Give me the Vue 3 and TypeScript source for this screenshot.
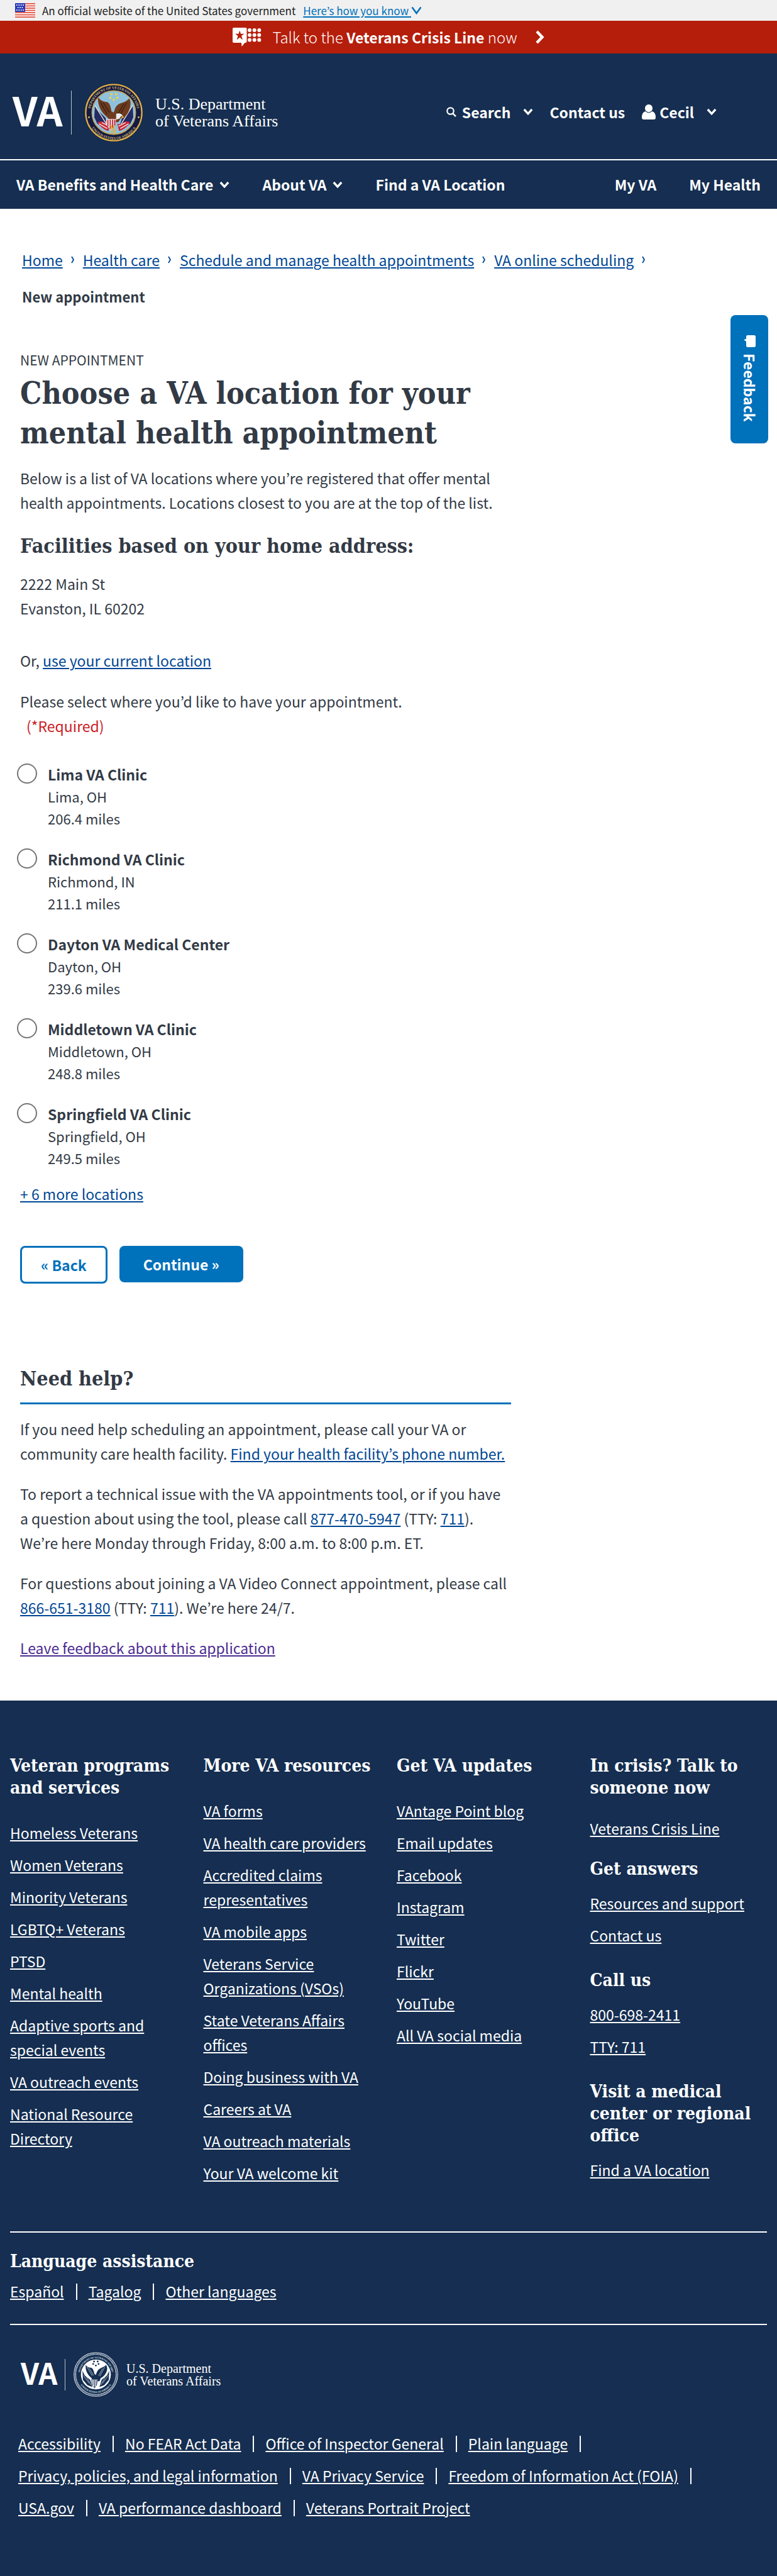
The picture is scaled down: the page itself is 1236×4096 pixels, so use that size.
<script setup lang="ts">
import { ref } from 'vue'

interface Facility {
  id: string
  name: string
  city: string
  miles: string
}

interface LinkGroup {
  title: string
  links: string[]
}

const facilities: Facility[] = [
  { id: 'lima', name: 'Lima VA Clinic', city: 'Lima, OH', miles: '206.4 miles' },
  { id: 'richmond', name: 'Richmond VA Clinic', city: 'Richmond, IN', miles: '211.1 miles' },
  { id: 'dayton', name: 'Dayton VA Medical Center', city: 'Dayton, OH', miles: '239.6 miles' },
  { id: 'middletown', name: 'Middletown VA Clinic', city: 'Middletown, OH', miles: '248.8 miles' },
  { id: 'springfield', name: 'Springfield VA Clinic', city: 'Springfield, OH', miles: '249.5 miles' },
]

const selected = ref('')

const crumbs: string[] = [
  'Home',
  'Health care',
  'Schedule and manage health appointments',
  'VA online scheduling',
]

const columns: LinkGroup[] = [
  {
    title: 'Veteran programs and services',
    links: [
      'Homeless Veterans',
      'Women Veterans',
      'Minority Veterans',
      'LGBTQ+ Veterans',
      'PTSD',
      'Mental health',
      'Adaptive sports and special events',
      'VA outreach events',
      'National Resource Directory',
    ],
  },
  {
    title: 'More VA resources',
    links: [
      'VA forms',
      'VA health care providers',
      'Accredited claims representatives',
      'VA mobile apps',
      'Veterans Service Organizations (VSOs)',
      'State Veterans Affairs offices',
      'Doing business with VA',
      'Careers at VA',
      'VA outreach materials',
      'Your VA welcome kit',
    ],
  },
  {
    title: 'Get VA updates',
    links: [
      'VAntage Point blog',
      'Email updates',
      'Facebook',
      'Instagram',
      'Twitter',
      'Flickr',
      'YouTube',
      'All VA social media',
    ],
  },
]

const contactGroups: LinkGroup[] = [
  { title: 'In crisis? Talk to someone now', links: ['Veterans Crisis Line'] },
  { title: 'Get answers', links: ['Resources and support', 'Contact us'] },
  { title: 'Call us', links: ['800-698-2411', 'TTY: 711'] },
  { title: 'Visit a medical center or regional office', links: ['Find a VA location'] },
]

const languages: string[] = ['Español', 'Tagalog', 'Other languages']

const legalLinks: string[][] = [
  ['Accessibility', 'No FEAR Act Data', 'Office of Inspector General', 'Plain language'],
  ['Privacy, policies, and legal information', 'VA Privacy Service', 'Freedom of Information Act (FOIA)'],
  ['USA.gov', 'VA performance dashboard', 'Veterans Portrait Project'],
]
</script>

<template>
  <div class="page">
    <div class="gov-banner">
      <svg class="flag" viewBox="0 0 32 23" aria-hidden="true">
        <rect width="32" height="23" fill="#fff" />
        <g fill="#e0523f">
          <rect v-for="i in 7" :key="i" x="0" :y="(i - 1) * 3.54" width="32" height="1.77" />
        </g>
        <rect width="16" height="14" fill="#2a3bb5" />
        <g fill="#fff">
          <circle v-for="i in 4" :key="'a' + i" :cx="i * 3.4 - 0.5" cy="3" r="1" />
          <circle v-for="i in 3" :key="'b' + i" :cx="i * 3.4 + 1.2" cy="7" r="1" />
          <circle v-for="i in 4" :key="'c' + i" :cx="i * 3.4 - 0.5" cy="11" r="1" />
        </g>
      </svg>
      <span>An official website of the United States government</span>
      <button type="button" class="know">
        <span class="know-text">Here’s how you know&nbsp;</span>
        <svg class="know-arrow" viewBox="0 0 17 14" aria-hidden="true">
          <path d="M1.5 1.5 8.5 11 15.5 1.5" fill="none" stroke="#0071bb" stroke-width="2.6" />
        </svg>
      </button>
    </div>

    <a href="#" class="crisis">
      <svg class="crisis-icon" viewBox="0 0 45 30" aria-hidden="true">
        <path d="M1.800 0H20.700a1.800 1.800 0 0 1 1.800 1.800V22.200a1.800 1.800 0 0 1-1.800 1.800H19.500L14.500 30 14 24H1.800A1.800 1.800 0 0 1 0 22.200V1.800A1.800 1.800 0 0 1 1.800 0Z" fill="#fff" />
        <path d="M11.300 4.500 13 9.800H18.500L14.100 13.100 16 19.500 11.300 15.500 6.600 19.500 8.500 13.100 4.100 9.800H9.600Z" fill="#b51e0b" />
        <g fill="#fff">
          <template v-for="r in 3" :key="r">
            <circle v-for="c in 3" :key="c" :cx="19.500 + c * 7.600" :cy="r * 7.800 - 3.800" r="3" />
          </template>
        </g>
      </svg>
      <span class="crisis-text">Talk to the <strong>Veterans Crisis Line</strong> now</span>
      <svg class="crisis-arrow" viewBox="0 0 14 22" aria-hidden="true">
        <path d="M2 2 10.500 11 2 20" fill="none" stroke="#fff" stroke-width="4.500" />
      </svg>
    </a>

    <header class="header">
      <div class="brand-row">
        <a href="#" class="brand" aria-label="VA home">
          <span class="brand-va">VA</span>
          <span class="brand-line"></span>
          <svg class="seal" viewBox="0 0 200 200" aria-hidden="true">
            <defs>
              <path id="seal-top" d="M20 100A80 80 0 0 1 180 100" />
              <path id="seal-bottom" d="M9 100A91 91 0 0 0 191 100" />
            </defs>
            <circle cx="100" cy="100" r="99" fill="#1d1f3f" />
            <circle cx="100" cy="100" r="95" fill="#151a45" stroke="#d9ad45" stroke-width="5" />
            <circle cx="100" cy="100" r="74" fill="#8fc1dc" stroke="#c79d3e" stroke-width="3" />
            <g class="seal-letters" fill="#d6b868">
              <text><textPath href="#seal-top" startOffset="50%">DEPARTMENT OF VETERANS AFFAIRS</textPath></text>
              <text><textPath href="#seal-bottom" startOffset="50%">UNITED STATES OF AMERICA</textPath></text>
              <circle cx="16" cy="116" r="3" />
              <circle cx="184" cy="116" r="3" />
            </g>
            <g fill="#f1d24b">
              <circle cx="92" cy="38" r="4" /><circle cx="108" cy="38" r="4" />
              <circle cx="88" cy="50" r="4" /><circle cx="112" cy="50" r="4" />
              <circle cx="100" cy="57" r="4" />
            </g>
            <path d="M36 76 46 92 72 118 82 150 66 152 44 138 34 116Z" fill="#252a63" />
            <path d="M164 76 154 92 128 118 118 150 134 152 156 138 166 116Z" fill="#252a63" />
            <path d="M36 76 76 140M164 76 124 140" stroke="#e8e2d4" stroke-width="3" />
            <path d="M44 134q14-8 24 0t20 4l-6 24q-20-4-38-28Z" fill="#c6283a" />
            <path d="M156 134q-14-8-24 0t-20 4l6 24q20-4 38-28Z" fill="#c6283a" />
            <path d="M50 138 78 154M60 134 84 146M150 138 122 154M140 134 116 146" stroke="#f2e9e4" stroke-width="3" />
            <path d="M46 48Q60 64 74 64T92 96L100 100Q106 72 124 68T152 52Q162 66 152 92T124 118L116 132 92 134 78 116Q46 92 46 48Z" fill="#6f3b1f" />
            <path d="M54 64 78 106M64 66 86 100M144 66 122 106M134 70 114 104" stroke="#3d2013" stroke-width="3" />
            <path d="M108 104q14-4 22 6-8 2-10 10l-12 4Z" fill="#e9edf2" />
            <path d="M128 110l8 6-10 4Z" fill="#e2b13c" />
            <path d="M74 122h34l-4 22-14 16-16-18Z" fill="#f3eeee" />
            <path d="M80 124v24M88 124v32M96 124v28M103 124v20" stroke="#c6283a" stroke-width="4" />
            <path d="M90 142q6 20 4 30M100 142q0 18 6 28" stroke="#e2b13c" stroke-width="5" fill="none" />
          </svg>
          <span class="brand-name">U.S. Department<br />of Veterans Affairs</span>
        </a>
        <div class="tools">
          <button type="button" class="tool">
            <svg class="icon-search" viewBox="0 0 16 16" aria-hidden="true">
              <circle cx="6.500" cy="6.500" r="5.200" fill="none" stroke="#fff" stroke-width="2.200" />
              <path d="m10.300 10.300 4.700 4.900" stroke="#fff" stroke-width="2.400" />
            </svg>
            <span>Search</span>
            <svg class="chev wide" viewBox="0 0 16 12" aria-hidden="true">
              <path d="M1.800 2 8 8.800 14.200 2" fill="none" stroke="#fff" stroke-width="3.400" />
            </svg>
          </button>
          <a href="#" class="tool contact">Contact us</a>
          <button type="button" class="tool">
            <svg class="icon-user" viewBox="0 0 22 24" aria-hidden="true">
              <ellipse cx="11" cy="6.200" rx="6" ry="6.200" fill="#fff" />
              <path d="M5.500 11q5.500 4.800 11 0 5.500 1.500 5.500 9.500 0 3.500-3 3.500H3q-3 0-3-3.500 0-8 5.500-9.500Z" fill="#fff" />
            </svg>
            <span>Cecil</span>
            <svg class="chev wide" viewBox="0 0 16 12" aria-hidden="true">
              <path d="M1.800 2 8 8.800 14.200 2" fill="none" stroke="#fff" stroke-width="3.400" />
            </svg>
          </button>
        </div>
      </div>
      <nav class="main-nav" aria-label="Main">
        <button type="button" class="nav-item">
          VA Benefits and Health Care
          <svg class="chev" viewBox="0 0 16 12" aria-hidden="true">
            <path d="M1.800 2 8 8.800 14.200 2" fill="none" stroke="#fff" stroke-width="3.400" />
          </svg>
        </button>
        <button type="button" class="nav-item">
          About VA
          <svg class="chev" viewBox="0 0 16 12" aria-hidden="true">
            <path d="M1.800 2 8 8.800 14.200 2" fill="none" stroke="#fff" stroke-width="3.400" />
          </svg>
        </button>
        <a href="#" class="nav-item">Find a VA Location</a>
        <a href="#" class="nav-item push">My VA</a>
        <a href="#" class="nav-item">My Health</a>
      </nav>
    </header>

    <button type="button" class="feedback">
      <svg class="feedback-icon" viewBox="0 0 19 19" aria-hidden="true">
        <path d="M6 0H16.500a2.500 2.500 0 0 1 2.500 2.500V16.500a2.500 2.500 0 0 1-2.500 2.500H6.500a2.500 2.500 0 0 1-2.500-2.500V10L0 7 4 6V2.500A2.500 2.500 0 0 1 6 0Z" fill="#fff" />
      </svg>
      <span>Feedback</span>
    </button>

    <nav class="crumbs" aria-label="Breadcrumb">
      <span v-for="crumb in crumbs" :key="crumb" class="crumb">
        <a href="#">{{ crumb }}</a>
        <svg class="crumb-sep" viewBox="0 0 5 12" aria-hidden="true">
          <path d="M1 1 4 6 1 11" fill="none" stroke="#004795" stroke-width="1.800" />
        </svg>
      </span>
      <strong class="crumb-current">New appointment</strong>
    </nav>

    <main class="content">
      <p class="eyebrow">NEW APPOINTMENT</p>
      <h1>Choose a VA location for your mental health appointment</h1>
      <p class="intro">
        Below is a list of VA locations where you’re registered that offer mental health
        appointments. Locations closest to you are at the top of the list.
      </p>
      <h2 class="address-title">Facilities based on your home address:</h2>
      <p class="address">2222 Main St<br />Evanston, IL 60202</p>
      <p class="locate">Or, <a href="#">use your current location</a></p>

      <fieldset class="choices">
        <legend>
          Please select where you’d like to have your appointment.
          <span class="required">(*Required)</span>
        </legend>
        <div v-for="f in facilities" :key="f.id" class="choice">
          <input :id="f.id" v-model="selected" type="radio" name="facility" :value="f.id" />
          <label :for="f.id">
            <strong>{{ f.name }}</strong>
            <span>{{ f.city }}</span>
            <span>{{ f.miles }}</span>
          </label>
        </div>
      </fieldset>
      <p class="more"><a href="#">+ 6 more locations</a></p>

      <div class="actions">
        <button type="button" class="btn back">« Back</button>
        <button type="button" class="btn next">Continue »</button>
      </div>

      <section class="help">
        <h2>Need help?</h2>
        <p>
          If you need help scheduling an appointment, please call your VA or community care health
          facility. <a href="#">Find your health facility’s phone number.</a>
        </p>
        <p>
          To report a technical issue with the VA appointments tool, or if you have a question about
          using the tool, please call <a href="#">877-470-5947</a> (TTY: <a href="#">711</a>).<br />
          We’re here Monday through Friday, 8:00 a.m. to 8:00 p.m. ET.
        </p>
        <p>
          For questions about joining a VA Video Connect appointment, please call
          <a href="#">866-651-3180</a> (TTY: <a href="#">711</a>). We’re here 24/7.
        </p>
        <p><a href="#" class="visited">Leave feedback about this application</a></p>
      </section>
    </main>

    <footer class="footer">
      <div class="footer-grid">
        <section v-for="col in columns" :key="col.title">
          <h2>{{ col.title }}</h2>
          <ul>
            <li v-for="link in col.links" :key="link"><a href="#">{{ link }}</a></li>
          </ul>
        </section>
        <div class="contact-col">
          <section v-for="group in contactGroups" :key="group.title">
            <h2>{{ group.title }}</h2>
            <ul>
              <li v-for="link in group.links" :key="link"><a href="#">{{ link }}</a></li>
            </ul>
          </section>
        </div>
      </div>

      <section class="language">
        <h2>Language assistance</h2>
        <ul class="inline-links">
          <li v-for="lang in languages" :key="lang"><a href="#">{{ lang }}</a></li>
        </ul>
      </section>

      <a href="#" class="brand small" aria-label="VA home">
        <span class="brand-va">VA</span>
        <span class="brand-line"></span>
        <svg class="seal" viewBox="0 0 200 200" aria-hidden="true">
          <circle cx="100" cy="100" r="98" fill="#152e51" stroke="#dfe5ec" stroke-width="3" />
          <circle cx="100" cy="100" r="91" fill="none" stroke="#dfe5ec" stroke-width="6" stroke-dasharray="3 2" />
          <circle cx="100" cy="100" r="67" fill="#fff" />
          <g class="seal-letters tight" fill="#dfe5ec">
            <text><textPath href="#mono-top" startOffset="50%">DEPARTMENT OF VETERANS AFFAIRS</textPath></text>
            <text><textPath href="#mono-bottom" startOffset="50%">UNITED STATES OF AMERICA</textPath></text>
          </g>
          <defs>
            <path id="mono-top" d="M28 100A72 72 0 0 1 172 100" />
            <path id="mono-bottom" d="M17 100A83 83 0 0 0 183 100" />
          </defs>
          <g fill="#152e51">
            <circle cx="92" cy="42" r="4" /><circle cx="108" cy="42" r="4" />
            <circle cx="88" cy="53" r="4" /><circle cx="112" cy="53" r="4" />
            <circle cx="100" cy="60" r="4" />
            <path d="M54 58Q64 70 76 70T94 98L100 102Q106 78 122 72T146 58Q156 74 146 92T122 116L116 130 92 132 80 116Q52 94 54 58Z" />
            <path d="M40 84 50 104 74 124 84 156 62 148 42 124Z" />
            <path d="M160 84 150 104 126 124 116 156 138 148 158 124Z" />
          </g>
          <path d="M60 66 84 106M70 72 90 104M140 66 118 108M130 74 112 106M44 104 70 140M156 104 130 140M54 104 78 148M146 104 122 148" stroke="#dfe5ec" stroke-width="2" />
          <path d="M80 122h28l-4 22-10 18-14-20Z" fill="#fff" stroke="#152e51" stroke-width="2" />
          <path d="M87 124v24M94 124v34M101 124v26" stroke="#152e51" stroke-width="3" />
        </svg>
        <span class="brand-name">U.S. Department<br />of Veterans Affairs</span>
      </a>

      <div class="legal">
        <ul v-for="(row, i) in legalLinks" :key="i" class="inline-links" :class="{ open: i < 2 }">
          <li v-for="link in row" :key="link"><a href="#">{{ link }}</a></li>
        </ul>
      </div>
    </footer>
  </div>
</template>

<style>
body {
  background: #fff;
}
</style>

<style scoped>
.page {
  position: relative;
  font-family: 'Noto Sans CJK KR', 'Noto Sans', sans-serif;
  font-size: 23px;
  line-height: 39px;
  color: #323a45;
}
h1,
h2,
p,
ul,
fieldset {
  margin: 0;
  padding: 0;
  border: 0;
}
ul {
  list-style: none;
}
h1,
h2 {
  font-family: 'DejaVu Serif Condensed', 'DejaVu Serif', serif;
  font-weight: 700;
}
button {
  padding: 0;
  border: 0;
  background: none;
  font: inherit;
  color: inherit;
}
a {
  color: #004795;
  text-decoration: underline;
  text-decoration-thickness: 2px;
  text-underline-offset: 2px;
}
svg {
  flex: none;
  overflow: visible;
}

/* Banners */
.gov-banner {
  display: flex;
  align-items: center;
  height: 33px;
  padding-left: 24px;
  background: #f0f0f0;
  font-size: 17px;
  line-height: 33px;
  color: #212121;
}
.flag {
  width: 32px;
  height: 23px;
  margin-right: 11px;
}
.know {
  display: flex;
  align-items: center;
  margin-left: 12px;
  color: #0071bb;
}
.know-text {
  text-decoration: underline;
  text-decoration-thickness: 2px;
  text-underline-offset: 2px;
}
.know-arrow {
  width: 17px;
  height: 14px;
}
.crisis {
  display: flex;
  align-items: center;
  justify-content: center;
  height: 52px;
  background: #b51e0b;
  color: #fff;
  text-decoration: none;
}
.crisis-icon {
  width: 45px;
  height: 30px;
}
.crisis-text {
  margin: 0 29px 0 18px;
  font-size: 24px;
  font-weight: 300;
}
.crisis-text strong {
  font-size: 23px;
  font-weight: 700;
}
.crisis-arrow {
  width: 14px;
  height: 22px;
}

/* Header */
.header {
  background: #152e51;
  color: #fff;
}
.brand-row {
  display: flex;
  align-items: center;
  justify-content: space-between;
  height: 168px;
  padding: 0 96px 0 20px;
  border-bottom: 2px solid #fff;
}
.brand {
  display: flex;
  align-items: center;
  margin-top: 20px;
  color: #fff;
  text-decoration: none;
}
.brand-va {
  width: 76px;
  margin-bottom: 12px;
  font-size: 64px;
  line-height: 64px;
  font-weight: 700;
}
.brand-line {
  width: 1px;
  height: 70px;
  margin: 0 20px 0 17px;
  background: #b9c2ce;
}
.seal {
  width: 94px;
  height: 94px;
}
.seal-letters {
  font-family: 'Liberation Serif', serif;
  font-size: 12px;
  font-weight: 700;
  text-anchor: middle;
}
.seal-letters.tight {
  font-size: 11px;
}
.brand-name {
  margin-left: 19px;
  font-family: 'Liberation Serif', serif;
  font-size: 26px;
  line-height: 27px;
}
.tools {
  display: flex;
  align-items: center;
  margin-top: 18px;
  font-weight: 700;
}
.tool {
  display: flex;
  align-items: center;
  color: #fff;
  text-decoration: none;
}
.icon-search {
  width: 16px;
  height: 16px;
  margin-right: 9px;
}
.icon-user {
  width: 22px;
  height: 24px;
  margin-right: 6px;
}
.contact {
  margin: 0 27px 0 26px;
}
.chev {
  width: 16px;
  height: 12px;
  margin-left: 10px;
}
.chev.wide {
  margin-left: 20px;
}
.main-nav {
  display: flex;
  align-items: center;
  gap: 52px;
  height: 77px;
  padding: 0 26px;
  font-weight: 700;
}
.nav-item {
  display: flex;
  align-items: center;
  color: #fff;
  text-decoration: none;
}
.push {
  margin-left: auto;
}

/* Floating feedback tab */
.feedback {
  position: absolute;
  top: 501px;
  right: 14px;
  display: flex;
  flex-direction: column;
  align-items: center;
  gap: 10px;
  width: 60px;
  height: 204px;
  padding-top: 32px;
  border-radius: 8px;
  background: #0071bb;
  color: #fff;
  font-weight: 700;
}
.feedback span {
  writing-mode: vertical-rl;
}
.feedback-icon {
  width: 19px;
  height: 19px;
}

/* Breadcrumb */
.crumbs {
  display: flex;
  flex-wrap: wrap;
  padding: 52px 35px 0;
  line-height: 58px;
}
.crumb {
  display: flex;
  align-items: center;
}
.crumb-sep {
  width: 5px;
  height: 12px;
  margin: 0 14px 0 13px;
}
.crumb-current {
  flex-basis: 100%;
  font-size: 22px;
}

/* Main column */
.content {
  width: 63.2%;
  padding: 53px 0 64px 32px;
}
.eyebrow {
  font-size: 21px;
  line-height: 38px;
}
h1 {
  margin-top: 3px;
  font-size: 48px;
  line-height: 63px;
}
.intro {
  margin-top: 21px;
}
.address-title {
  margin-top: 30px;
}
.content h2 {
  font-size: 32px;
  line-height: 38px;
}
.address {
  margin-top: 22px;
}
.locate {
  margin-top: 44px;
}
.choices {
  min-width: 0;
  margin-top: 26px;
}
legend {
  padding: 0;
  margin-bottom: 39px;
}
.required {
  display: block;
  padding-left: 10px;
  color: #cd2026;
}
.choice {
  display: flex;
  align-items: flex-start;
  gap: 17px;
}
.choice + .choice {
  margin-top: 29px;
}
.choice input {
  appearance: none;
  flex: none;
  width: 32px;
  height: 32px;
  margin: 1px 0 0 -5px;
  border: 2px solid #757575;
  border-radius: 50%;
  background: #fff;
}
.choice input:checked {
  background: #0071bb;
}
.choice label {
  display: grid;
  font-size: 22px;
  line-height: 35px;
}
.choice strong {
  font-size: 23px;
  line-height: 36px;
}
.more {
  margin-top: 20px;
}
.actions {
  display: flex;
  align-items: flex-start;
  gap: 19px;
  margin-top: 63px;
}
.btn {
  border-radius: 8px;
  font-weight: 700;
}
.back {
  height: 60px;
  padding: 0 30px;
  border: 3px solid #0071bb;
  color: #0071bb;
}
.next {
  height: 58px;
  padding: 0 38px;
  background: #0071bb;
  color: #fff;
}
.help {
  margin-top: 132px;
}
.help h2 {
  padding-bottom: 19px;
  margin-bottom: 20px;
  border-bottom: 3px solid #0071bb;
}
.help p + p {
  margin-top: 25px;
}
.visited {
  color: #4c2c92;
}

/* Footer */
.footer {
  padding: 86px 16px 90px;
  background: #152e51;
  color: #fff;
}
.footer a {
  color: #fff;
}
.footer h2 {
  font-size: 28px;
  line-height: 35px;
}
.footer-grid {
  display: grid;
  grid-template-columns: repeat(4, minmax(0, 1fr));
  column-gap: 26px;
}
.footer-grid ul {
  margin-top: 35px;
}
.footer-grid li + li {
  margin-top: 12px;
}
.contact-col section + section {
  margin-top: 34px;
}
.contact-col section:nth-child(2) {
  margin-top: 27px;
}
.contact-col ul {
  margin-top: 18px;
}
.contact-col section:first-child ul {
  margin-top: 28px;
}
.language {
  margin-top: 73px;
  padding: 28px 0 32px;
  border-top: 2px solid #fff;
  border-bottom: 2px solid #fff;
}
.language .inline-links {
  margin-top: 11px;
}
.inline-links {
  display: flex;
}
.inline-links li {
  display: flex;
  align-items: center;
}
.inline-links li:not(:last-child)::after,
.inline-links.open li:last-child::after {
  content: '';
  width: 2px;
  height: 26px;
  margin: 0 18px 0 19px;
  background: #fff;
}
.brand.small {
  width: max-content;
  margin: 43px 0 0 17px;
  text-decoration: none;
}
.small .brand-va {
  width: 57px;
  margin-bottom: 8px;
  font-size: 47px;
  line-height: 47px;
}
.small .brand-line {
  height: 50px;
  margin: 0 13px;
}
.small .seal {
  width: 71px;
  height: 71px;
}
.small .brand-name {
  margin-left: 13px;
  font-size: 20px;
  line-height: 20px;
}
.legal {
  display: grid;
  gap: 12px;
  margin: 55px 0 0 13px;
}
</style>
